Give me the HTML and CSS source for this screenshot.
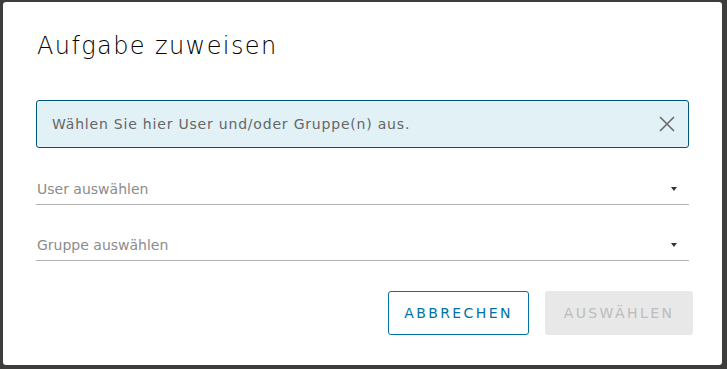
FILE: index.html
```html
<html>

<head>
  <meta charset="utf-8" />
  <title>Aufgabe zuweisen</title>
  <link rel="stylesheet" href="styles.css">
</head>

<body>
  <div class="modal">
    <h3 class="modal-title">Aufgabe zuweisen</h3>

    <div class="alert">
      <span class="alert-text">Wählen Sie hier User und/oder Gruppe(n) aus.</span>
      <button class="close" aria-label="Schließen">
        <svg width="16" height="16" viewBox="0 0 16 16">
          <path d="M1 1 L15 15 M15 1 L1 15" stroke="#6a6a6a" stroke-width="1.6" fill="none" />
        </svg>
      </button>
    </div>

    <div class="select">
      <span class="placeholder">User auswählen</span>
      <span class="caret"></span>
    </div>

    <div class="select">
      <span class="placeholder">Gruppe auswählen</span>
      <span class="caret"></span>
    </div>

    <div class="footer">
      <button class="btn btn-outline">Abbrechen</button>
      <button class="btn btn-disabled" disabled>Auswählen</button>
    </div>
  </div>
</body>

</html>
```

FILE: styles.css
```css
body {
  margin: 0;
  padding: 2px 5px 4px 3px;
  background: #3d3d3b;
  font-family: "DejaVu Sans", "Open Sans", sans-serif;
}

.modal {
  background: #fff;
  border-radius: 3px;
  height: 363px;
  box-sizing: border-box;
  padding: 0 33px;
  display: flex;
  flex-direction: column;
}

.modal-title {
  margin: 28px 0 0 1px;
  font-size: 24px;
  font-weight: 200;
  letter-spacing: 1.4px;
  color: #000;
  line-height: 32px;
}

.alert {
  margin: 38px 0 1px;
  height: 48px;
  box-sizing: border-box;
  border: 1px solid #00567a;
  border-radius: 3px;
  background: #e1f1f6;
  display: flex;
  align-items: center;
  padding: 0 13px 0 15px;
}

.alert-text {
  flex: 1;
  font-size: 14px;
  letter-spacing: 0.8px;
  color: #666;
}

.close {
  border: none;
  background: none;
  padding: 0;
  width: 16px;
  height: 16px;
  cursor: pointer;
}

.select {
  height: 56px;
  box-sizing: border-box;
  border-bottom: 1px solid #b3b3b3;
  display: flex;
  align-items: flex-end;
  padding: 0 12px 7px 1px;
}

.placeholder {
  flex: 1;
  font-size: 14px;
  color: #8c8c8c;
}

.caret {
  width: 0;
  height: 0;
  border-left: 3.5px solid transparent;
  border-right: 3.5px solid transparent;
  border-top: 4px solid #333;
  margin-bottom: 6px;
}

.footer {
  display: flex;
  justify-content: flex-end;
  gap: 16px;
  margin-top: 30px;
}

.btn {
  height: 44px;
  border-radius: 3px;
  font-family: inherit;
  font-size: 14px;
  letter-spacing: 2.4px;
  text-transform: uppercase;
}

.btn-outline {
  width: 141px;
  border: 1px solid #0072a3;
  background: #fff;
  color: #0072a3;
}

.btn-disabled {
  width: 148px;
  border: none;
  background: #e8e8e8;
  color: #bcbcbc;
  margin-right: -4px;
}
```
